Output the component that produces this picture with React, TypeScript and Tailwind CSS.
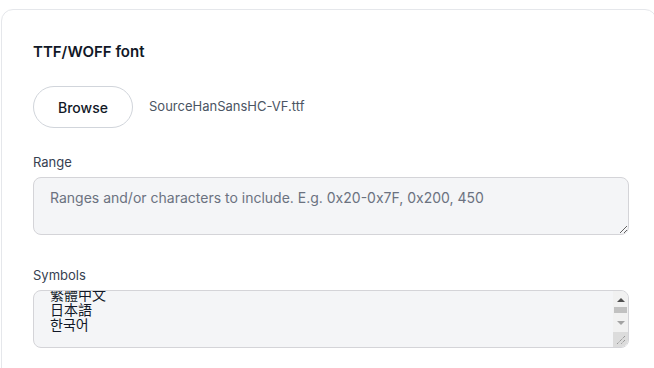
import { useEffect, useRef } from "react";

const FONT = "font-['Inter','Noto_Sans_CJK_SC','Noto_Sans_CJK_KR',sans-serif]";

function Field({ label, children }: { label: string; children: React.ReactNode }) {
  return (
    <div>
      <label className="mb-[5px] block text-[13px] leading-5 text-[#374151]">{label}</label>
      {children}
    </div>
  );
}

// classic scrollbar as Chrome draws it, with the resize corner
function FakeScrollbar() {
  return (
    <div className="pointer-events-none absolute bottom-px right-px top-px flex w-[15px] flex-col overflow-hidden rounded-r-[7px] bg-[#f1f1f1]">
      <div className="flex h-[15px] items-center justify-center pt-[2px]">
        <div className="h-0 w-0 border-x-[4px] border-b-[4px] border-x-transparent border-b-[#505050]" />
      </div>
      <div className="h-[11px] px-px pt-px">
        <div className="h-[6px] bg-[#c1c1c1]" />
      </div>
      <div className="flex h-[15px] items-start justify-center pt-[4px]">
        <div className="h-0 w-0 border-x-[4px] border-t-[4px] border-x-transparent border-t-[#a3a3a3]" />
      </div>
      <div className="flex flex-1 items-end justify-end bg-[#dcdcdc]">
        <svg width="12" height="12" viewBox="0 0 12 12" className="mb-[2px] mr-[2px]">
          <path d="M11 3 L3 11 M11 7 L7 11" stroke="#7a7a7a" strokeWidth="1" strokeDasharray="1 1" />
        </svg>
      </div>
    </div>
  );
}

export default function App() {
  const symbolsRef = useRef<HTMLTextAreaElement>(null);

  useEffect(() => {
    if (symbolsRef.current) symbolsRef.current.scrollTop = 9999;
  }, []);

  return (
    <div className={`h-[368px] w-full overflow-hidden bg-white pl-px pt-[9px] ${FONT}`}>
      <div className="h-[400px] w-[656px] rounded-xl border border-[#e5e7eb] bg-white pl-[31px] pt-[32px]">
        <h2 className="text-[15px] font-semibold leading-5 text-[#111827]">TTF/WOFF font</h2>

        <div className="mt-6 flex items-center gap-4">
          <button className="h-[42px] w-[100px] rounded-full border border-[#d1d5db] bg-white text-[14px] font-medium text-[#111827]">
            Browse
          </button>
          <span className="text-[13px] text-[#4b5563]">SourceHanSansHC-VF.ttf</span>
        </div>

        <div className="mt-[24px]">
          <Field label="Range">
            <textarea
              className={`block h-[58px] w-[596px] rounded-lg border border-[#d4d4d8] bg-[#f4f5f7] px-4 py-3 text-[14px] leading-[15px] text-[#111827] outline-none placeholder:text-[#6b7280] ${FONT}`}
              placeholder="Ranges and/or characters to include. E.g. 0x20-0x7F, 0x200, 450"
            />
          </Field>
        </div>

        <div className="mt-[30px]">
          <Field label="Symbols">
            <div className="relative w-[596px]">
              <textarea
                ref={symbolsRef}
                className={`block h-[58px] w-full overflow-hidden rounded-lg border border-[#d4d4d8] bg-[#f4f5f7] px-4 pb-[15px] pt-3 text-[14px] leading-[15px] text-[#111827] outline-none ${FONT}`}
                defaultValue={"简体中文\n繁體中文\n日本語\n한국어"}
              />
              <FakeScrollbar />
            </div>
          </Field>
        </div>
      </div>
    </div>
  );
}
